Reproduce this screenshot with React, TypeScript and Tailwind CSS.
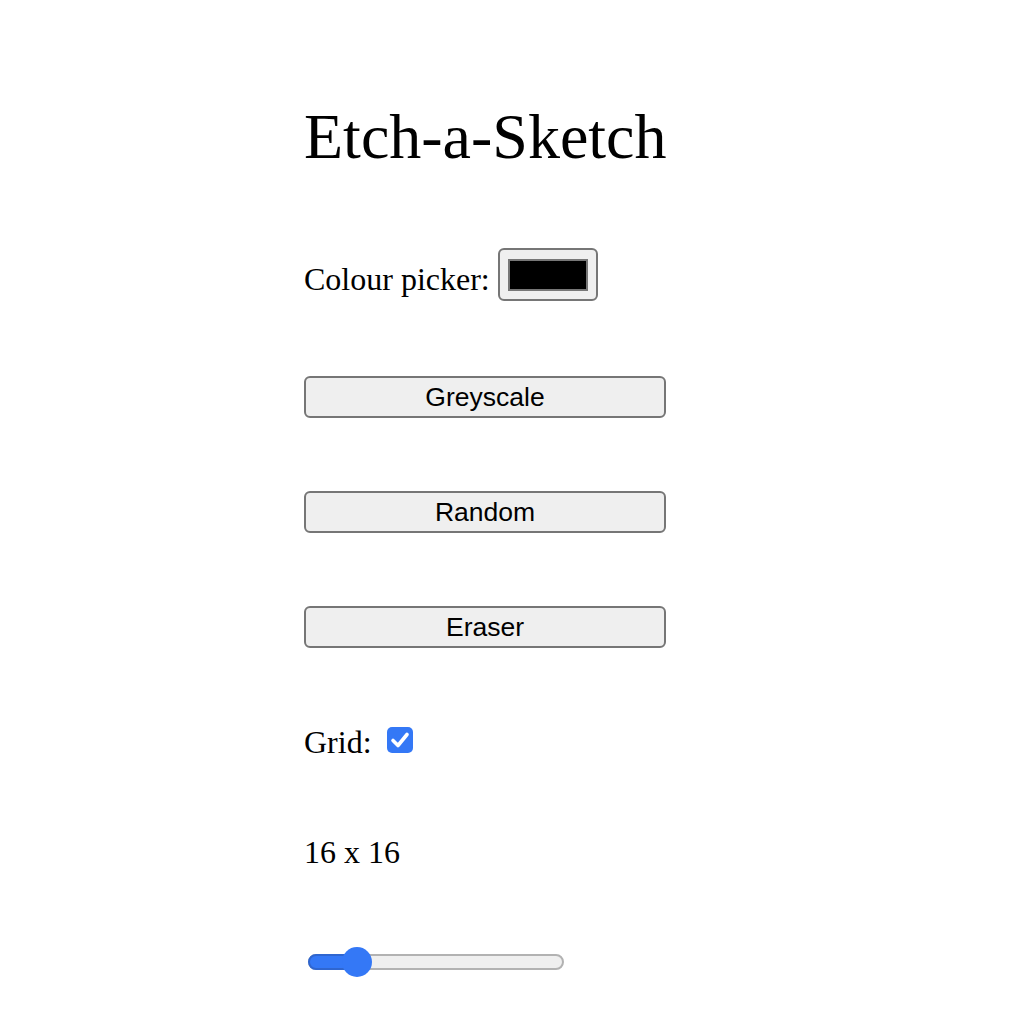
import React, { useState } from 'react';

const serif = "font-['Liberation_Serif','Times_New_Roman',serif]";
const sans = "font-['Liberation_Sans',Arial,sans-serif]";

const ModeButton: React.FC<{ label: string }> = ({ label }) => (
  <button
    type="button"
    className={`${sans} mt-[73px] first-of-type:mt-[75px] h-[42px] w-[362px] rounded-[6px] border-2 border-[#767676] bg-[#efefef] text-[26.5px] leading-none text-black`}
  >
    {label}
  </button>
);

export default function App() {
  const [size] = useState(16);
  const pct = (size - 1) / 99;

  return (
    <div className={`${serif} min-h-[1024px] bg-white pl-[304px] pt-[105px] text-black`}>
      <div className="flex w-[362px] flex-col">
        <h1 className="m-0 whitespace-nowrap text-[64px] font-normal leading-[64px]">Etch-a-Sketch</h1>

        <div className="mt-[79px] flex items-start">
          <span className="mt-[13px] text-[32px] leading-[36px]">Colour picker:</span>
          <div className="ml-[8px] flex h-[53px] w-[100px] items-center justify-center rounded-[6px] border-2 border-[#767676] bg-[#efefef]">
            <div className="h-[32px] w-[80px] border-2 border-[#777777] bg-black" />
          </div>
        </div>

        <div className="flex flex-col">
          <ModeButton label="Greyscale" />
          <ModeButton label="Random" />
          <ModeButton label="Eraser" />
        </div>

        <div className="mt-[76px] flex items-start">
          <span className="text-[32px] leading-[36px]">Grid:</span>
          <div className="ml-[15px] mt-[3px] flex h-[26px] w-[26px] items-center justify-center rounded-[5px] bg-[#3478f6]">
            <svg width="26" height="26" viewBox="0 0 26 26" fill="none">
              <path d="M6 13.5 L11 18.5 L20 7.5" stroke="white" strokeWidth="3.6" strokeLinecap="round" strokeLinejoin="round" />
            </svg>
          </div>
        </div>

        <p className="m-0 mt-[74px] text-[32px] leading-[36px]">
          {size} x {size}
        </p>

        <div className="ml-[4px] mt-[77px] flex h-[30px] w-[256px] items-center">
          <div className="relative h-[16px] w-full rounded-full border-2 border-[#b2b2b2] bg-[#efefef]">
            <div
              className="absolute -left-[2px] -top-[2px] h-[16px] rounded-l-full border-2 border-[#2f66d0] bg-[#3478f6]"
              style={{ width: `${15 + pct * 226 + 2}px` }}
            />
            <div
              className="absolute -top-[9px] h-[30px] w-[30px] rounded-full bg-[#3478f6]"
              style={{ left: `${pct * 226 - 2}px` }}
            />
          </div>
        </div>
      </div>
    </div>
  );
}
